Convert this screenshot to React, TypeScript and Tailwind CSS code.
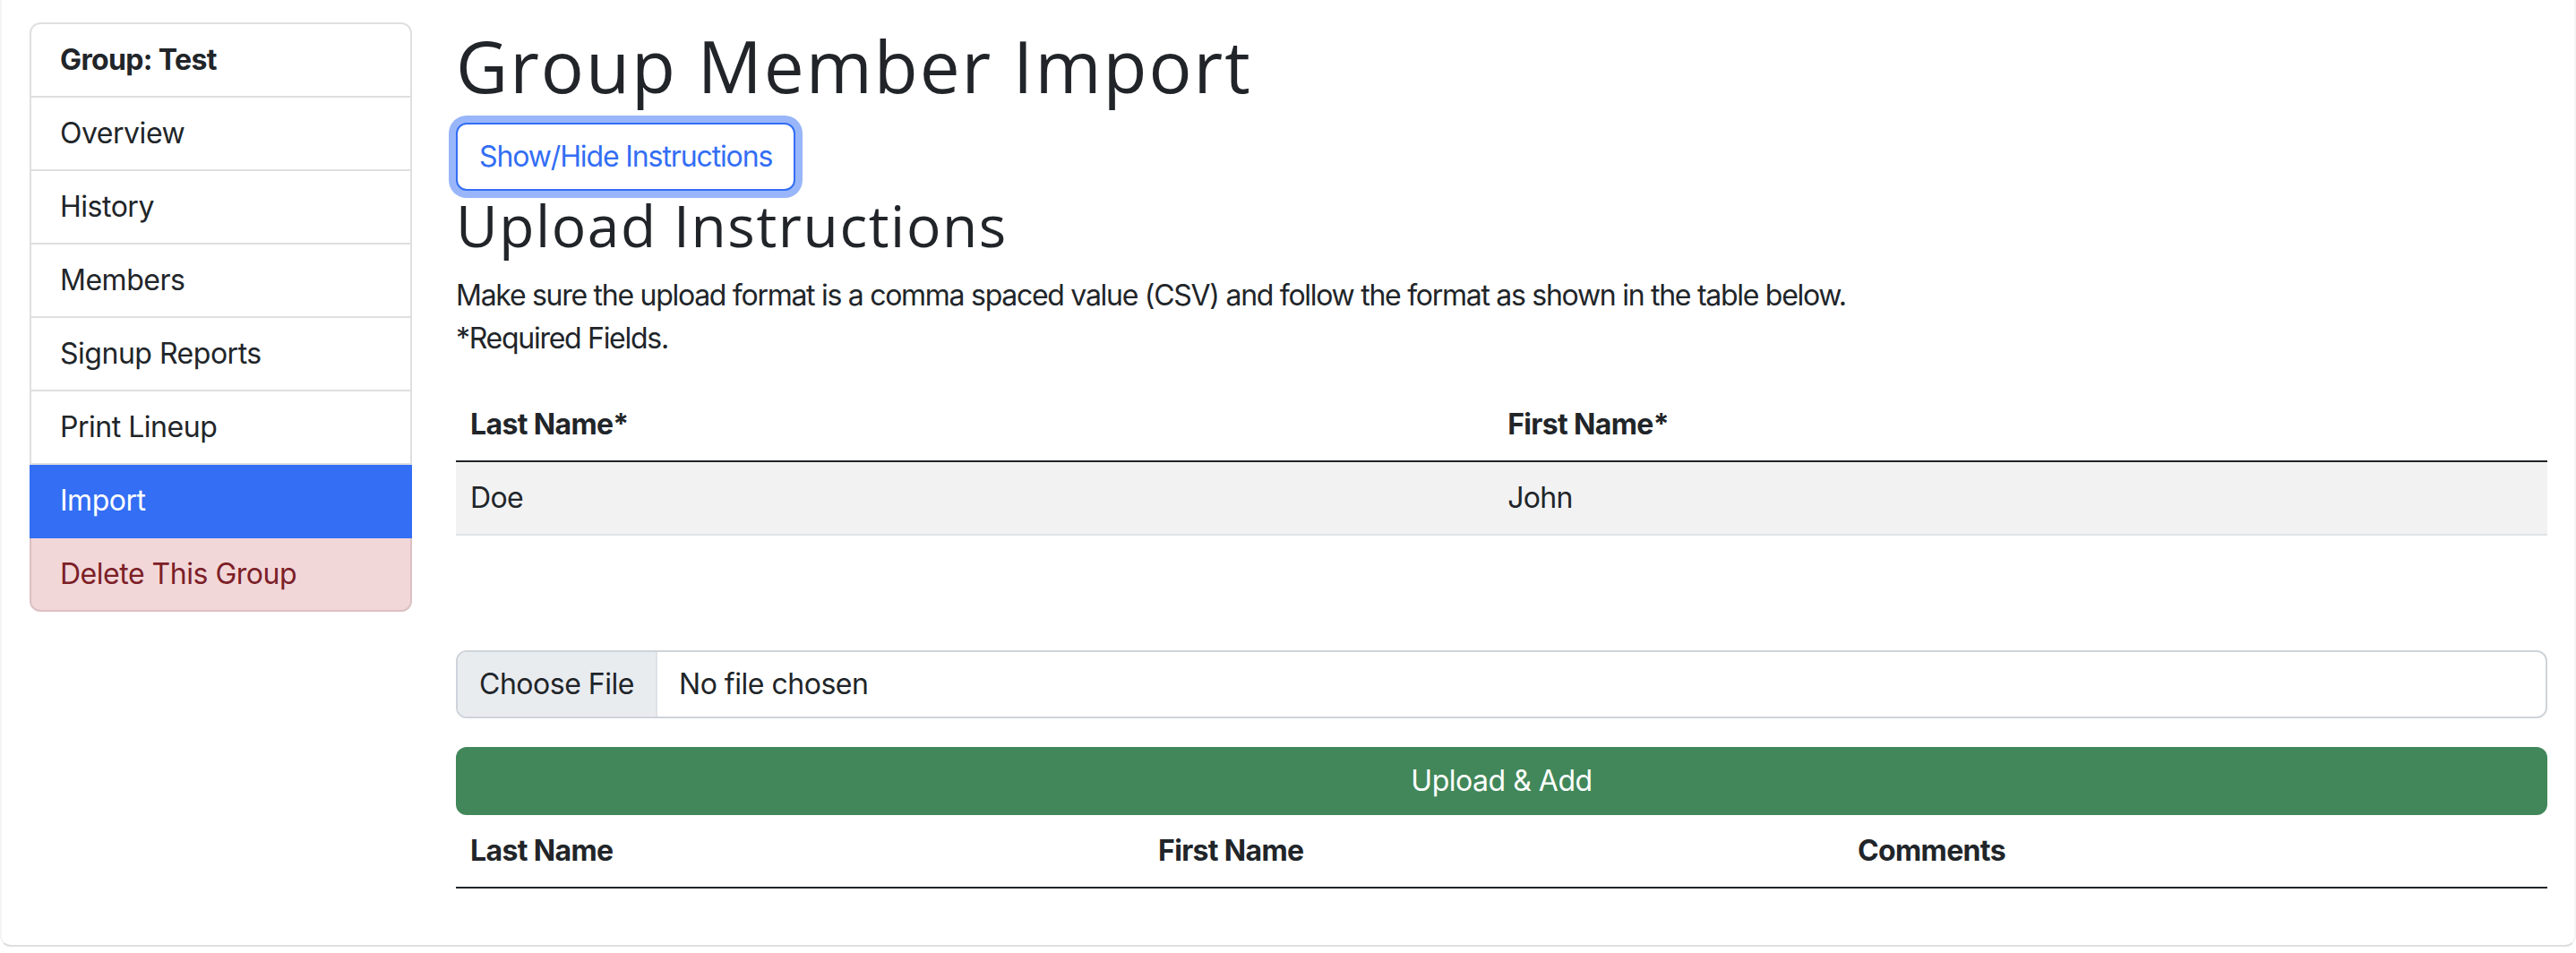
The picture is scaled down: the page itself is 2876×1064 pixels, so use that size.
const menu = [
  { label: 'Overview' },
  { label: 'History' },
  { label: 'Members' },
  { label: 'Signup Reports' },
  { label: 'Print Lineup' },
  { label: 'Import', active: true },
];

const body = { fontFamily: 'Inter, "Liberation Sans", sans-serif' };
const display = { fontFamily: '"Open Sans", "DejaVu Sans", sans-serif' };

function Sidebar() {
  return (
    <nav className="w-[427px] shrink-0 self-start text-[32px] leading-[48px] text-[#212529]">
      <div className="rounded-t-[12px] border-2 border-[#dfdfdf] px-[32px] py-[16px] font-bold tracking-[-0.02em]">Group: Test</div>
      {menu.map((item) =>
        item.active ? (
          <div key={item.label} className="border-x-2 border-b-2 border-[#336ef4] bg-[#336ef4] px-[32px] py-[16px] text-white">
            {item.label}
          </div>
        ) : (
          <div key={item.label} className="border-x-2 border-b-2 border-[#dfdfdf] px-[32px] py-[16px]">
            {item.label}
          </div>
        )
      )}
      <div className="rounded-b-[12px] border-x-2 border-b-2 border-[#dcc0c3] bg-[#f2d7d9] px-[32px] py-[16px] text-[#7b2027]">
        Delete This Group
      </div>
    </nav>
  );
}

export default function App() {
  return (
    <div className="min-h-screen bg-white tracking-[-0.03em] text-[#212529]" style={body}>
      <div className="flex gap-[49px] rounded-b-[12px] border-x-2 border-b-2 border-x-[#f4f4f4] border-b-[#dfdfdf] pb-[63px] pl-[31px] pr-[30px] pt-[25px]">
        <Sidebar />

        <main className="min-w-0 flex-1 text-[32px] leading-[48px]">
          <h1 className="mb-[16px] text-[80px] font-medium leading-[96px] tracking-[0.025em]" style={display}>
            Group Member Import
          </h1>
          <button className="rounded-[12px] border-2 border-[#336ef4] bg-white px-[24px] py-[12px] tracking-[-0.035em] text-[#336ef4] shadow-[0_0_0_8px_#98b6f9]">
            Show/Hide Instructions
          </button>
          <h2 className="mb-[16px] text-[64px] font-medium leading-[77px] tracking-[0.025em]" style={display}>
            Upload Instructions
          </h2>
          <p className="mb-[32px] tracking-[-0.04em]">
            Make sure the upload format is a comma spaced value (CSV) and follow the format as shown in the table below.
            <br />
            *Required Fields.
          </p>

          <table className="mb-[128px] w-full border-collapse text-left tracking-[-0.02em]">
            <thead>
              <tr className="border-b-2 border-[#212529]">
                <th className="w-[49.6%] p-[16px] font-bold">Last Name*</th>
                <th className="p-[16px] font-bold">First Name*</th>
              </tr>
            </thead>
            <tbody>
              <tr className="border-b-2 border-[#dee2e6] bg-[#f2f2f2]">
                <td className="p-[16px]">Doe</td>
                <td className="p-[16px]">John</td>
              </tr>
            </tbody>
          </table>

          <div className="flex h-[76px] overflow-hidden rounded-[12px] border-2 border-[#ced4da]">
            <span className="flex items-center border-r-2 border-[#dee2e6] bg-[#e9ecef] px-[24px]">Choose File</span>
            <span className="flex items-center px-[24px]">No file chosen</span>
          </div>

          <button className="mt-[32px] h-[76px] w-full rounded-[12px] bg-[#41875a] text-white">Upload &amp; Add</button>

          <table className="w-full border-collapse text-left tracking-[-0.02em]">
            <thead>
              <tr className="border-b-2 border-[#212529]">
                <th className="w-[768px] p-[16px] font-bold">Last Name</th>
                <th className="w-[781px] p-[16px] font-bold">First Name</th>
                <th className="p-[16px] font-bold">Comments</th>
              </tr>
            </thead>
          </table>
        </main>
      </div>
    </div>
  );
}
